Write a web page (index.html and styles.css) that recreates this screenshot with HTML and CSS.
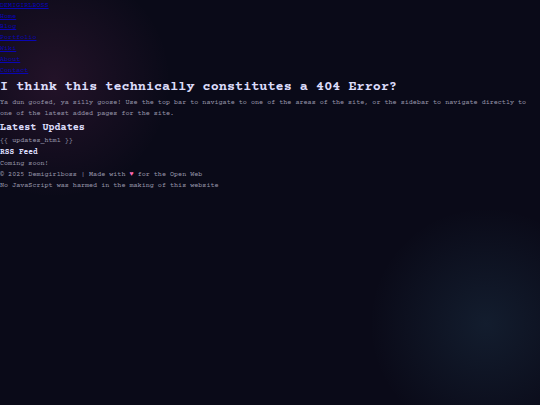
FILE: index.html
```html
<!DOCTYPE html>
<html lang="en">
<head>
<meta charset="utf-8">
<title>404 | Demigirlboss</title>
<link rel="stylesheet" href="styles.css">
</head>
<body>
<header>
  <a href="#">DEMIGIRLBOSS</a>
  <nav>
    <ul>
      <li><a href="#">Home</a></li>
      <li><a href="#">Blog</a></li>
      <li><a href="#">Portfolio</a></li>
      <li><a href="#">Wiki</a></li>
      <li><a href="#">About</a></li>
      <li><a href="#">Contact</a></li>
    </ul>
  </nav>
</header>
<main>
  <h1>I think this technically constitutes a 404 Error?</h1>
  <p>Ya dun goofed, ya silly goose! Use the top bar to navigate to one of the areas of the site, or the sidebar to navigate directly to one of the latest added pages for the site.</p>
</main>
<aside>
  <h2>Latest Updates</h2>
  <p>{{ updates_html }}</p>
  <h3>RSS Feed</h3>
  <p>Coming soon!</p>
</aside>
<footer>
  <p>© 2025 Demigirlboss | Made with <span class="heart">♥</span> for the Open Web</p>
  <p>No JavaScript was harmed in the making of this website</p>
</footer>
</body>
</html>
```
FILE: styles.css
```css
* {
  margin: 0;
  padding: 0;
  box-sizing: border-box;
}

body {
  min-height: 100vh;
  padding-top: 0.8px;
  font-family: "Courier Prime", "Nimbus Mono PS", "Nimbus Mono L", "FreeMono", "Courier 10 Pitch", "TeX Gyre Cursor", "Liberation Mono", monospace;
  font-size: 6.75px;
  line-height: 1.6;
  color: #9a99ad;
  background-color: #0a0a18;
  background-image:
    radial-gradient(circle at 10% 20%, rgba(255, 90, 185, 0.1) 0%, transparent 20%),
    radial-gradient(circle at 90% 80%, rgba(95, 195, 240, 0.1) 0%, transparent 20%);
}

header > a {
  display: block;
  width: fit-content;
}

ul {
  list-style: none;
}

a {
  color: #0a05b4;
  text-decoration-thickness: 0.5px;
}

h1,
h2,
h3 {
  color: #dcdcfa;
}

h1 {
  margin-bottom: -0.8px;
  padding-top: 0.8px;
  font-size: 2em;
  letter-spacing: 0.01px;
}

h2 {
  font-size: 1.5em;
}

h3 {
  font-size: 1.17em;
}

.heart {
  color: #ff69b4;
}
```
